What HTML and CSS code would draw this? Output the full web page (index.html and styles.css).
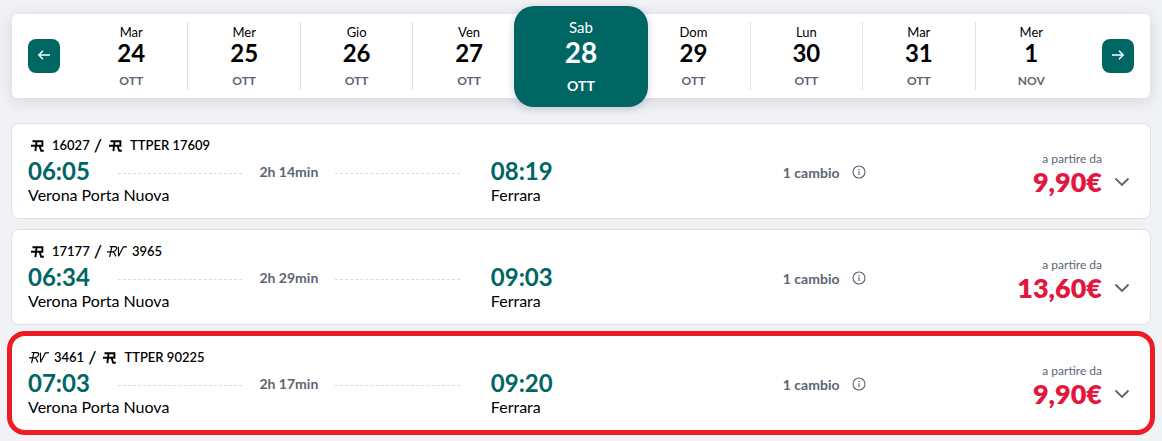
FILE: index.html
```html
<!DOCTYPE html>
<html lang="it">
<head>
  <meta charset="UTF-8">
  <meta name="viewport" content="width=device-width, initial-scale=1.0">
  <title>Verona Porta Nuova - Ferrara</title>
  <link rel="stylesheet" href="styles.css">
</head>
<body>
  <!-- shared icons -->
  <svg class="sprite" aria-hidden="true">
    <symbol id="icon-r" viewBox="0 0 20 16">
      <path d="M4.5 4.2H14.4V8.8H3M8.6 4L7.4 14.2M11.6 9L13.2 13.8H15.8" fill="none" stroke="#000" stroke-width="1.9"/>
    </symbol>
    <symbol id="icon-rv" viewBox="0 0 22 16">
      <path d="M3.6 3.6H8.8Q11.3 3.8 10.4 6.1Q9.6 8.4 6.8 8.8H1M5.8 3.8L3.6 14M7.6 9L10 13.4M12.4 3.8L12.6 13.2L17.4 3.8H21" fill="none" stroke="#000" stroke-width="1.2"/>
    </symbol>
    <symbol id="icon-info" viewBox="0 0 14 14">
      <circle cx="7" cy="7" r="6" fill="none" stroke="#5b6573" stroke-width="1.1"/>
      <path d="M7 6.2V10M7 4V5.2" stroke="#5b6573" stroke-width="1.2"/>
    </symbol>
    <symbol id="icon-chevron" viewBox="0 0 16 10">
      <path d="M1.5 1.5L8 8L14.5 1.5" fill="none" stroke="#5b6573" stroke-width="1.9"/>
    </symbol>
  </svg>

  <nav class="dates">
    <button type="button" class="arrow" aria-label="Giorni precedenti">
      <svg width="14" height="12" viewBox="0 0 14 12"><path d="M13 6H2M6 1.8L1.8 6L6 10.2" fill="none" stroke="#fff" stroke-width="1.4"/></svg>
    </button>
    <div class="days">
      <button type="button" class="day"><span class="weekday">Mar</span><span class="number">24</span><span class="month">OTT</span></button>
      <button type="button" class="day"><span class="weekday">Mer</span><span class="number">25</span><span class="month">OTT</span></button>
      <button type="button" class="day"><span class="weekday">Gio</span><span class="number">26</span><span class="month">OTT</span></button>
      <button type="button" class="day"><span class="weekday">Ven</span><span class="number">27</span><span class="month">OTT</span></button>
      <button type="button" class="day active"><span class="weekday">Sab</span><span class="number">28</span><span class="month">OTT</span></button>
      <button type="button" class="day"><span class="weekday">Dom</span><span class="number">29</span><span class="month">OTT</span></button>
      <button type="button" class="day"><span class="weekday">Lun</span><span class="number">30</span><span class="month">OTT</span></button>
      <button type="button" class="day"><span class="weekday">Mar</span><span class="number">31</span><span class="month">OTT</span></button>
      <button type="button" class="day"><span class="weekday">Mer</span><span class="number">1</span><span class="month">NOV</span></button>
    </div>
    <button type="button" class="arrow" aria-label="Giorni successivi">
      <svg width="14" height="12" viewBox="0 0 14 12"><path d="M1 6H12M8 1.8L12.2 6L8 10.2" fill="none" stroke="#fff" stroke-width="1.4"/></svg>
    </button>
  </nav>

  <main class="results">
    <article class="card">
      <div class="trains">
        <svg class="train-r"><use href="#icon-r"/></svg><span>16027</span>
        <span class="slash">/</span>
        <svg class="train-r"><use href="#icon-r"/></svg><span>TTPER 17609</span>
      </div>
      <div class="departure">
        <div class="route"><span class="time">06:05</span><span class="line"></span><span class="duration">2h 14min</span><span class="line"></span></div>
        <div class="station">Verona Porta Nuova</div>
      </div>
      <div class="arrival">
        <div class="time">08:19</div>
        <div class="station">Ferrara</div>
      </div>
      <div class="changes">1 cambio
        <button type="button" class="icon-btn" aria-label="Informazioni"><svg width="14" height="14"><use href="#icon-info"/></svg></button>
      </div>
      <div class="offer">
        <div class="price"><span class="from">a partire da</span><span class="amount">9,90€</span></div>
        <button type="button" class="icon-btn" aria-label="Apri"><svg width="16" height="10"><use href="#icon-chevron"/></svg></button>
      </div>
    </article>

    <article class="card">
      <div class="trains">
        <svg class="train-r"><use href="#icon-r"/></svg><span>17177</span>
        <span class="slash">/</span>
        <svg class="train-rv"><use href="#icon-rv"/></svg><span>3965</span>
      </div>
      <div class="departure">
        <div class="route"><span class="time">06:34</span><span class="line"></span><span class="duration">2h 29min</span><span class="line"></span></div>
        <div class="station">Verona Porta Nuova</div>
      </div>
      <div class="arrival">
        <div class="time">09:03</div>
        <div class="station">Ferrara</div>
      </div>
      <div class="changes">1 cambio
        <button type="button" class="icon-btn" aria-label="Informazioni"><svg width="14" height="14"><use href="#icon-info"/></svg></button>
      </div>
      <div class="offer">
        <div class="price"><span class="from">a partire da</span><span class="amount">13,60€</span></div>
        <button type="button" class="icon-btn" aria-label="Apri"><svg width="16" height="10"><use href="#icon-chevron"/></svg></button>
      </div>
    </article>

    <article class="card highlighted">
      <div class="trains">
        <svg class="train-rv"><use href="#icon-rv"/></svg><span>3461</span>
        <span class="slash">/</span>
        <svg class="train-r"><use href="#icon-r"/></svg><span>TTPER 90225</span>
      </div>
      <div class="departure">
        <div class="route"><span class="time">07:03</span><span class="line"></span><span class="duration">2h 17min</span><span class="line"></span></div>
        <div class="station">Verona Porta Nuova</div>
      </div>
      <div class="arrival">
        <div class="time">09:20</div>
        <div class="station">Ferrara</div>
      </div>
      <div class="changes">1 cambio
        <button type="button" class="icon-btn" aria-label="Informazioni"><svg width="14" height="14"><use href="#icon-info"/></svg></button>
      </div>
      <div class="offer">
        <div class="price"><span class="from">a partire da</span><span class="amount">9,90€</span></div>
        <button type="button" class="icon-btn" aria-label="Apri"><svg width="16" height="10"><use href="#icon-chevron"/></svg></button>
      </div>
    </article>
  </main>
</body>
</html>
```
FILE: styles.css
```css
* {
  box-sizing: border-box;
}

body {
  margin: 0;
  padding: 14px 11px 10px;
  background-color: #f1f2f6;
  font-family: Lato, sans-serif;
  color: #000;
}

button {
  border: none;
  padding: 0;
  background: none;
  font-family: inherit;
  color: inherit;
  cursor: pointer;
}

svg {
  display: block;
  flex: none;
}

.sprite {
  position: absolute;
  width: 0;
  height: 0;
}

/* date bar */
.dates {
  display: flex;
  align-items: center;
  gap: 15px;
  margin: 0 1px;
  padding: 8px 16px;
  background-color: #fff;
  border-radius: 6px;
  box-shadow: 0 3px 16px rgba(40, 40, 70, 0.14);
}

.arrow {
  display: flex;
  align-items: center;
  justify-content: center;
  width: 32px;
  height: 34px;
  padding-bottom: 2px;
  border-radius: 8px;
  background-color: #006663;
}

.days {
  flex: 1;
  display: grid;
  grid-template-columns: repeat(9, 1fr);
}

.day {
  display: flex;
  flex-direction: column;
  align-items: center;
  height: 68px;
  padding-top: 2px;
  border-left: 1px solid #e0e1ea;
}

.day:first-child,
.active + .day {
  border-left: none;
}

.weekday {
  font-size: 13px;
  line-height: 16px;
}

.number {
  font-size: 24px;
  font-weight: 700;
  line-height: 26px;
}

.month {
  margin-top: 7px;
  font-size: 12px;
  font-weight: 700;
  line-height: 16px;
  color: #5b6573;
}

.day.active {
  z-index: 1;
  height: 101px;
  margin: -16px -11px -17px;
  padding-top: 11px;
  border: none;
  border-radius: 20px;
  background-color: #006663;
  color: #fff;
  box-shadow: 0 2px 8px rgba(40, 40, 70, 0.2);
}

.active .weekday {
  font-size: 15px;
  line-height: 20px;
}

.active .number {
  font-size: 28px;
  line-height: 30px;
}

.active .month {
  margin-top: 11px;
  font-size: 14px;
  color: #fff;
}

/* solutions */
.results {
  display: flex;
  flex-direction: column;
  gap: 10px;
  margin-top: 25px;
}

.card {
  display: grid;
  grid-template-columns: 42% 26.5% auto 1fr;
  grid-template-rows: 22px auto;
  row-gap: 1px;
  padding: 10px 20px 13px 16px;
  border: 1px solid #e0e1ea;
  border-radius: 8px;
  background-color: #fff;
}

.highlighted {
  border-color: #fff;
  border-radius: 14px;
  outline: 5px solid #ed1c24;
  outline-offset: -1px;
}

.trains {
  grid-column: 1 / 4;
  display: flex;
  align-items: center;
  gap: 4px;
  font-size: 13px;
  font-weight: 600;
}

.train-r {
  width: 20px;
  height: 16px;
}

.train-rv {
  width: 22px;
  height: 16px;
}

.slash {
  font-size: 18px;
  line-height: 20px;
}

.departure,
.arrival,
.changes {
  grid-row: 2;
}

.route {
  display: flex;
  align-items: center;
  gap: 17px;
  padding-right: 31px;
}

.route .time {
  margin-right: 11px;
}

.time {
  font-size: 24px;
  font-weight: 700;
  line-height: 28px;
  color: #006663;
}

.line {
  flex: 1;
  margin-top: 4px;
  border-top: 1px dashed #d9dbdf;
}

.duration,
.changes {
  font-size: 14px;
  font-weight: 700;
  color: #5b6573;
}

.station {
  font-size: 16px;
  line-height: 20px;
}

.changes {
  display: flex;
  align-items: center;
  gap: 12px;
  height: 30px;
}

.offer {
  grid-row: 1 / 3;
  grid-column: 4;
  display: flex;
  align-items: flex-end;
  justify-content: flex-end;
  gap: 12px;
  padding-bottom: 8px;
}

.offer .icon-btn {
  height: 30px;
}

.price {
  display: flex;
  flex-direction: column;
  align-items: flex-end;
}

.from {
  font-size: 12px;
  line-height: 16px;
  color: #5b6573;
}

.amount {
  font-size: 27px;
  font-weight: 800;
  line-height: 30px;
  color: #e3173e;
}
```
